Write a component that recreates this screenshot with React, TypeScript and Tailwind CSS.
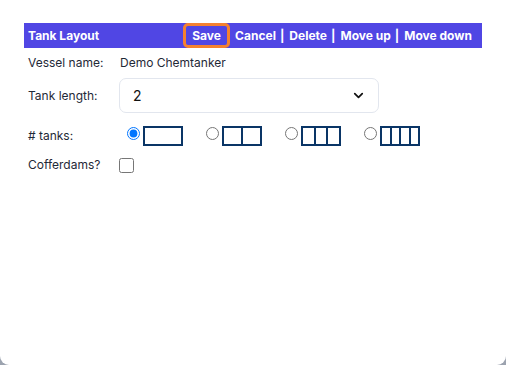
import { ChevronDown } from 'lucide-react';

const tankOptions = [1, 2, 3, 4];

function TankBoxes({ count }: { count: number }) {
  return (
    <div className="flex h-[20px] w-[40px] border-2 border-[#0a3566]">
      {Array.from({ length: count }).map((_, i) => (
        <div
          key={i}
          className={i === 0 ? 'flex-1' : 'flex-1 border-l-2 border-[#0a3566]'}
        />
      ))}
    </div>
  );
}

export default function App() {
  return (
    <div className="h-[365px] w-[506px] bg-[#9ca3af]">
      <div
        className="h-full w-full rounded-b-[9px] bg-white pt-[23px] text-[12px] text-[#1f2937]"
        style={{ fontFamily: 'Inter, "Liberation Sans", sans-serif' }}
      >
        {/* Header bar */}
        <div className="mx-[24px] flex h-[25px] items-center bg-[#5046e4] pl-[4px] font-bold text-white">
          <span className="flex-1">Tank Layout</span>
          <div className="mr-[10px] flex items-center">
            <button
              type="button"
              className="flex h-[25px] w-[47px] items-center justify-center rounded-[5px] border-[3px] border-[#f5812f] font-bold"
            >
              Save
            </button>
            <span className="ml-[5px]">Cancel</span>
            <span className="ml-[4px] mr-[5px]">|</span>
            <span>Delete</span>
            <span className="ml-[4px] mr-[5px]">|</span>
            <span>Move up</span>
            <span className="ml-[4px] mr-[5px]">|</span>
            <span>Move down</span>
          </div>
        </div>

        <div className="px-[28px]">
          <div className="flex h-[29px] items-center">
            <span className="w-[92px]">Vessel name:</span>
            <span>Demo Chemtanker</span>
          </div>

          <div className="flex h-[37px] items-center">
            <span className="w-[91px]">Tank length:</span>
            <div className="flex h-[35px] w-[260px] items-center justify-between rounded-[7px] border border-[#e2e6ee] pl-[13px] pr-[12px] text-[14px] text-[#111]">
              <span>2</span>
              <ChevronDown size={15} strokeWidth={2.75} />
            </div>
          </div>

          <div className="flex h-[38px] items-center pt-[5px]">
            <span className="w-[99px]">#&nbsp;tanks:</span>
            <div className="flex items-center">
              {tankOptions.map((n) => (
                <label key={n} className="flex w-[79px] items-start gap-[3px]">
                  <input
                    type="radio"
                    name="tanks"
                    defaultChecked={n === 1}
                    className="m-0 mt-[1px] h-[13px] w-[13px]"
                  />
                  <TankBoxes count={n} />
                </label>
              ))}
            </div>
          </div>

          <div className="flex h-[26px] items-center">
            <span className="w-[91px]">Cofferdams?</span>
            <input type="checkbox" className="m-0 h-[15px] w-[15px]" />
          </div>
        </div>
      </div>
    </div>
  );
}
